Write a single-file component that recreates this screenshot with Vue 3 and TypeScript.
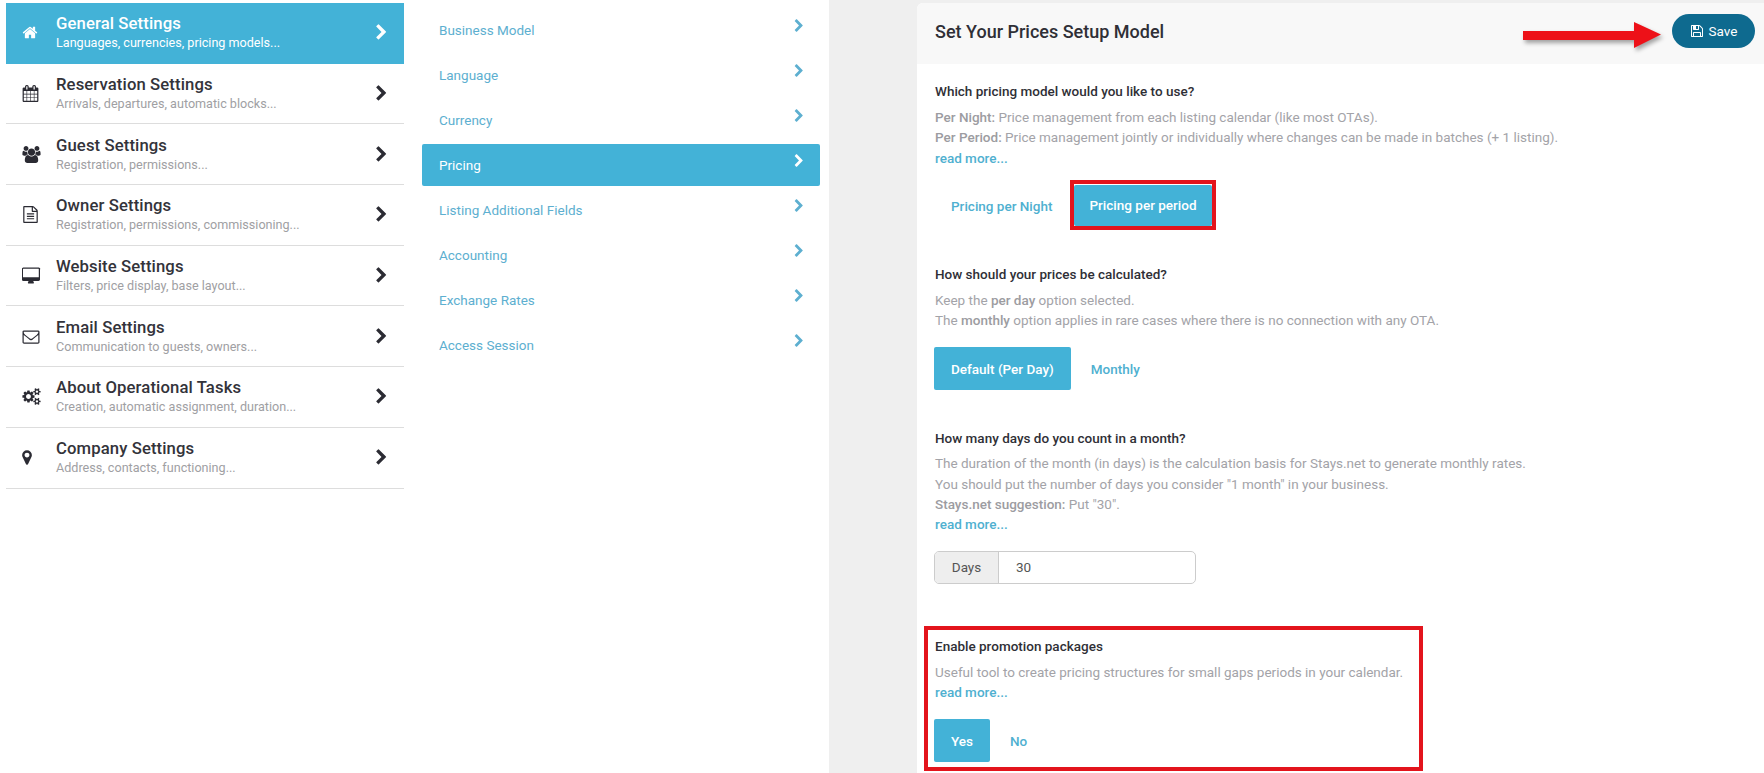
<script setup lang="ts">
interface NavItem {
  title: string
  sub: string
  icon: string
  box: string
  w: number
  active?: boolean
}

const chevron = 'M1363 877l-742 742q-19 19-45 19t-45-19l-166-166q-19-19-19-45t19-45l531-531-531-531q-19-19-19-45t19-45l166-166q19-19 45-19t45 19l742 742q19 19 19 45t-19 45z'
const floppy = 'M512 1536h768v-384h-768v384zm896 0h128v-896q0-14-10-38.500t-20-34.500l-281-281q-10-10-34-20t-39-10v416q0 40-28 68t-68 28h-576q-40 0-68-28t-28-68v-416h-128v1280h128v-416q0-40 28-68t68-28h832q40 0 68 28t28 68v416zm-384-928v-320q0-13-9.500-22.500t-22.500-9.500h-192q-13 0-22.500 9.500t-9.500 22.500v320q0 13 9.500 22.500t22.500 9.500h192q13 0 22.500-9.500t9.500-22.500zm640 32v928q0 40-28 68t-68 28h-1344q-40 0-68-28t-28-68v-1344q0-40 28-68t68-28h928q40 0 88 20t76 48l280 280q28 28 48 76t20 88z'

const mainNav: NavItem[] = [
  { title: 'General Settings', sub: 'Languages, currencies, pricing models...', active: true, box: '0 0 1792 1792', w: 16,
    icon: 'M1472 992v480q0 26-19 45t-45 19h-384v-384h-256v384h-384q-26 0-45-19t-19-45v-480q0-1 .5-3t.5-3l575-474 575 474q1 2 1 6zm223-69l-62 74q-8 9-21 11h-3q-13 0-21-7l-692-577-692 577q-12 8-24 7-13-2-21-11l-62-74q-8-10-7-23.5t11-21.5l719-599q32-26 76-26t76 26l244 204v-195q0-14 9-23t23-9h192q14 0 23 9t9 23v408l219 182q10 8 11 21.5t-7 23.5z' },
  { title: 'Reservation Settings', sub: 'Arrivals, departures, automatic blocks...', box: '0 0 1792 1792', w: 17,
    icon: 'M192 1664h288v-288h-288v288zm352 0h320v-288h-320v288zm-352-352h288v-320h-288v320zm352 0h320v-320h-320v320zm-352-384h288v-288h-288v288zm736 736h320v-288h-320v288zm-384-736h320v-288h-320v288zm768 736h288v-288h-288v288zm-384-352h320v-320h-320v320zm-352-864v-288q0-13-9.5-22.5t-22.5-9.5h-64q-13 0-22.5 9.5t-9.5 22.5v288q0 13 9.5 22.5t22.5 9.5h64q13 0 22.5-9.5t9.5-22.5zm736 864h288v-320h-288v320zm-384-384h320v-288h-320v288zm384 0h288v-288h-288v288zm32-480v-288q0-13-9.5-22.5t-22.5-9.5h-64q-13 0-22.5 9.5t-9.5 22.5v288q0 13 9.5 22.5t22.5 9.5h64q13 0 22.5-9.5t9.5-22.5zm384-64v1280q0 52-38 90t-90 38h-1408q-52 0-90-38t-38-90v-1280q0-52 38-90t90-38h128v-96q0-66 47-113t113-47h64q66 0 113 47t47 113v96h384v-96q0-66 47-113t113-47h64q66 0 113 47t47 113v96h128q52 0 90 38t38 90z' },
  { title: 'Guest Settings', sub: 'Registration, permissions...', box: '0 0 1920 1792', w: 19,
    icon: 'M593 896q-162 5-265 128h-134q-82 0-138-40.500t-56-118.500q0-353 124-353 6 0 43.500 21t97.500 42.500 119 21.500q67 0 133-23-5 37-5 66 0 139 81 256zm1071 637q0 120-73 189.500t-194 69.500h-874q-121 0-194-69.500t-73-189.500q0-53 3.500-103.500t14-109 26.500-108.500 43-97.500 62-81 85.500-53.500 111.500-20q10 0 43 21.500t73 48 107 48 135 21.500 135-21.500 107-48 73-48 43-21.500q61 0 111.500 20t85.500 53.500 62 81 43 97.500 26.500 108.500 14 109 3.500 103.500zm-1024-1277q0 106-75 181t-181 75-181-75-75-181 75-181 181-75 181 75 75 181zm704 384q0 159-112.500 271.500t-271.500 112.500-271.500-112.500-112.500-271.500 112.500-271.500 271.500-112.500 271.500 112.500 112.500 271.500zm576 225q0 78-56 118.500t-138 40.500h-134q-103-123-265-128 81-117 81-256 0-29-5-66 66 23 133 23 59 0 119-21.500t97.500-42.500 43.500-21q124 0 124 353zm-128-609q0 106-75 181t-181 75-181-75-75-181 75-181 181-75 181 75 75 181z' },
  { title: 'Owner Settings', sub: 'Registration, permissions, commissioning...', box: '0 0 1792 1792', w: 17,
    icon: 'M1596 380q28 28 48 76t20 88v1152q0 40-28 68t-68 28h-1344q-40 0-68-28t-28-68v-1600q0-40 28-68t68-28h896q40 0 88 20t76 48zm-444-244v376h376q-10-29-22-41l-313-313q-12-12-41-22zm384 1528v-1024h-416q-40 0-68-28t-28-68v-416h-768v1536h1280zm-1024-864q0-14 9-23t23-9h704q14 0 23 9t9 23v64q0 14-9 23t-23 9h-704q-14 0-23-9t-9-23v-64zm736 224q14 0 23 9t9 23v64q0 14-9 23t-23 9h-704q-14 0-23-9t-9-23v-64q0-14 9-23t23-9h704zm0 256q14 0 23 9t9 23v64q0 14-9 23t-23 9h-704q-14 0-23-9t-9-23v-64q0-14 9-23t23-9h704z' },
  { title: 'Website Settings', sub: 'Filters, price display, base layout...', box: '0 -64 1920 1792', w: 19,
    icon: 'M1728 992v-832q0-13-9.5-22.5t-22.5-9.5h-1600q-13 0-22.5 9.5t-9.5 22.5v832q0 13 9.5 22.5t22.5 9.5h1600q13 0 22.5-9.5t9.5-22.5zm128-832v1088q0 66-47 113t-113 47h-544q0 37 16 77.5t32 71 16 43.5q0 26-19 45t-45 19h-512q-26 0-45-19t-19-45q0-14 16-44t32-70 16-78h-544q-66 0-113-47t-47-113v-1088q0-66 47-113t113-47h1632q66 0 113 47t47 113z' },
  { title: 'Email Settings', sub: 'Communication to guests, owners...', box: '0 0 1792 1792', w: 18,
    icon: 'M1664 1504v-768q-32 36-69 66-268 206-426 338-51 43-83 67t-86.500 48.500-102.500 24.500h-2q-48 0-102.500-24.500t-86.500-48.500-83-67q-158-132-426-338-37-30-69-66v768q0 13 9.500 22.500t22.500 9.500h1472q13 0 22.500-9.500t9.500-22.500zm0-1051v-24.500l-.5-13-3-12.500-5.500-9-9-7.500-14-2.500h-1472q-13 0-22.500 9.500t-9.500 22.500q0 168 147 284 193 152 401 317 6 5 35 29.500t46 37.500 44.500 31.500 50.500 27.500 43 9h2q20 0 43-9t50.500-27.500 44.500-31.500 46-37.500 35-29.500q208-165 401-317 54-43 100.500-115.500t46.500-131.500zm128-37v1088q0 66-47 113t-113 47h-1472q-66 0-113-47t-47-113v-1088q0-66 47-113t113-47h1472q66 0 113 47t47 113z' },
  { title: 'About Operational Tasks', sub: 'Creation, automatic assignment, duration...', box: '0 0 1920 1792', w: 19,
    icon: 'M896 896q0-106-75-181t-181-75-181 75-75 181 75 181 181 75 181-75 75-181zm768 512q0-52-38-90t-90-38-90 38-38 90q0 53 37.5 90.500t90.500 37.500 90.500-37.500 37.500-90.500zm0-1024q0-52-38-90t-90-38-90 38-38 90q0 53 37.5 90.500t90.500 37.500 90.500-37.500 37.500-90.500zm-384 421v185q0 10-7 19.500t-16 10.500l-155 24q-11 35-32 76 34 48 90 115 7 11 7 20 0 12-7 19-23 30-82.500 89.500t-78.500 59.500q-11 0-21-7l-115-90q-37 19-77 31-11 108-23 155-7 24-30 24h-186q-11 0-20-7.500t-10-17.500l-23-153q-34-10-75-31l-118 89q-7 7-20 7-11 0-21-8-144-133-144-160 0-9 7-19 10-14 41-53t47-61q-23-44-35-82l-152-24q-10-1-17-9.500t-7-19.500v-185q0-10 7-19.500t16-10.500l155-24q11-35 32-76-34-48-90-115-7-11-7-20 0-12 7-20 22-30 82-89t79-59q11 0 21 7l115 90q34-18 77-32 11-108 23-154 7-24 30-24h186q11 0 20 7.500t10 17.500l23 153q34 10 75 31l118-89q8-7 20-7 11 0 21 8 144 133 144 160 0 8-7 19-12 16-42 54t-45 60q23 48 34 82l152 23q10 2 17 10.500t7 19.500zm640 533v140q0 16-149 31-12 27-30 52 51 113 51 138 0 4-4 7-122 71-124 71-8 0-46-47t-52-68q-20 2-30 2t-30-2q-14 21-52 68t-46 47q-2 0-124-71-4-3-4-7 0-25 51-138-18-25-30-52-149-15-149-31v-140q0-16 149-31 13-29 30-52-51-113-51-138 0-4 4-7 4-2 35-20t59-34 30-16q8 0 46 46.500t52 67.500q20-2 30-2t30 2q51-71 92-112l6-2q4 0 124 70 4 3 4 7 0 25-51 138 17 23 30 52 149 15 149 31zm0-1024v140q0 16-149 31-12 27-30 52 51 113 51 138 0 4-4 7-122 71-124 71-8 0-46-47t-52-68q-20 2-30 2t-30-2q-14 21-52 68t-46 47q-2 0-124-71-4-3-4-7 0-25 51-138-18-25-30-52-149-15-149-31v-140q0-16 149-31 13-29 30-52-51-113-51-138 0-4 4-7 4-2 35-20t59-34 30-16q8 0 46 46.500t52 67.500q20-2 30-2t30 2q51-71 92-112l6-2q4 0 124 70 4 3 4 7 0 25-51 138 17 23 30 52 149 15 149 31z' },
  { title: 'Company Settings', sub: 'Address, contacts, functioning...', box: '384 0 1024 1792', w: 10,
    icon: 'M1152 640q0-106-75-181t-181-75-181 75-75 181 75 181 181 75 181-75 75-181zm256 0q0 109-33 179l-364 774q-16 33-47.500 52t-67.500 19-67.500-19-46.500-52l-365-774q-33-70-33-179 0-212 150-362t362-150 362 150 150 362z' },
]

const subNav = ['Business Model', 'Language', 'Currency', 'Pricing', 'Listing Additional Fields', 'Accounting', 'Exchange Rates', 'Access Session']
</script>

<template>
  <div class="page">
    <div class="menus">
      <nav class="main-nav">
        <a v-for="item in mainNav" :key="item.title" class="main-row" :class="{ active: item.active }">
          <span class="icon-slot">
            <svg :viewBox="item.box" :width="item.w" height="17" fill="currentColor"><path :d="item.icon" /></svg>
          </span>
          <span class="main-text">
            <span class="main-title">{{ item.title }}</span>
            <span class="main-sub">{{ item.sub }}</span>
          </span>
          <svg class="main-chev" viewBox="0 0 1792 1792" width="17" height="17" fill="currentColor"><path :d="chevron" /></svg>
        </a>
      </nav>

      <nav class="sub-nav">
        <a v-for="name in subNav" :key="name" class="sub-row" :class="{ active: name === 'Pricing' }">
          <span>{{ name }}</span>
          <svg class="sub-chev" viewBox="0 0 1792 1792" width="14" height="14" fill="currentColor"><path :d="chevron" /></svg>
        </a>
      </nav>
    </div>

    <main class="content">
      <section class="card">
        <header class="card-head">
          <h1>Set Your Prices Setup Model</h1>
          <button class="save">
            <svg viewBox="0 0 1792 1792" width="14" height="14" fill="currentColor"><path :d="floppy" /></svg>
            Save
          </button>
          <svg class="arrow" viewBox="0 0 138 26" width="138" height="26">
            <path d="M0 9h111V0l27 12.500L111 26V18H0z" fill="#ed1118" />
          </svg>
        </header>

        <div class="card-body">
          <div class="block first">
            <h2>Which pricing model would you like to use?</h2>
            <p><b>Per Night:</b> Price management from each listing calendar (like most OTAs).</p>
            <p><b>Per Period:</b> Price management jointly or individually where changes can be made in batches (+ 1 listing).</p>
            <a class="more">read more...</a>
            <div class="toggle">
              <button class="opt">Pricing per Night</button>
              <button class="opt on marked">Pricing per period</button>
            </div>
          </div>

          <div class="block second">
            <h2>How should your prices be calculated?</h2>
            <p>Keep the <b>per day</b> option selected.</p>
            <p>The <b>monthly</b> option applies in rare cases where there is no connection with any OTA.</p>
            <div class="toggle">
              <button class="opt on">Default (Per Day)</button>
              <button class="opt">Monthly</button>
            </div>
          </div>

          <div class="block third">
            <h2>How many days do you count in a month?</h2>
            <p>The duration of the month (in days) is the calculation basis for Stays.net to generate monthly rates.</p>
            <p>You should put the number of days you consider "1 month" in your business.</p>
            <p><b>Stays.net suggestion:</b> Put "30".</p>
            <a class="more">read more...</a>
            <div class="days">
              <span class="days-label">Days</span>
              <span class="days-value">30</span>
            </div>
          </div>

          <div class="block fourth">
            <span class="frame"></span>
            <h2>Enable promotion packages</h2>
            <p>Useful tool to create pricing structures for small gaps periods in your calendar.</p>
            <a class="more">read more...</a>
            <div class="toggle">
              <button class="opt on">Yes</button>
              <button class="opt">No</button>
            </div>
          </div>
        </div>
      </section>
    </main>
  </div>
</template>

<style scoped>
.page {
  display: flex;
  height: 773px;
  overflow: hidden;
  font-family: Roboto, "Liberation Sans", sans-serif;
  background: #fff;
}

.menus {
  width: 829px;
  flex: none;
  display: flex;
  gap: 18px;
  padding-left: 6px;
  box-sizing: border-box;
}

.main-nav {
  width: 398px;
  padding-top: 3px;
}

.main-row {
  display: flex;
  align-items: center;
  height: 60.7px;
  box-sizing: border-box;
  border-bottom: 1px solid #ddd;
  color: #2b2b33;
}

.main-row.active {
  background: #43b2d7;
  color: #fff;
  border-bottom-color: #43b2d7;
}

.icon-slot {
  width: 50px;
  padding-left: 16px;
  box-sizing: border-box;
  display: flex;
  flex: none;
}

.main-text {
  flex: 1;
  display: flex;
  flex-direction: column;
  margin-top: -1px;
}

.main-title {
  font-size: 16.7px;
  font-weight: 500;
  line-height: 21px;
  letter-spacing: 0.1px;
  color: #33333a;
}

.main-row.active .main-title {
  color: #fff;
}

.main-sub {
  font-size: 12.6px;
  line-height: 17px;
  color: #a0a0a3;
}

.main-row.active .main-sub {
  color: #fff;
}

.main-chev {
  margin-right: 14px;
  flex: none;
}

.sub-nav {
  width: 398px;
  padding-top: 9px;
  display: flex;
  flex-direction: column;
  gap: 3px;
}

.sub-row {
  display: flex;
  align-items: center;
  justify-content: space-between;
  height: 42px;
  padding: 0 14px 1px 17px;
  box-sizing: border-box;
  border-radius: 2px;
  font-size: 13.5px;
  color: #5dafd0;
}

.sub-row.active {
  background: #43b2d7;
  color: #fff;
}

.sub-chev {
  margin-top: -8px;
}

.content {
  flex: 1;
  min-width: 0;
  background: #efefef;
  padding: 3px 0 0 88px;
}

.card {
  background: #fff;
  height: 100%;
  border-radius: 6px 0 0 0;
  overflow: hidden;
}

.card-head {
  position: relative;
  height: 61px;
  background: #f8f8f8;
  display: flex;
  align-items: center;
  justify-content: space-between;
  padding: 0 9px 5px 18px;
  box-sizing: border-box;
}

.card-head h1 {
  margin: 0;
  font-size: 18px;
  font-weight: 500;
  color: #2f2f36;
}

.arrow {
  position: absolute;
  left: 606px;
  top: 19px;
  overflow: visible;
  filter: drop-shadow(2px 3px 2px rgba(0, 0, 0, 0.35));
}

.save {
  height: 34px;
  width: 83px;
  border: none;
  border-radius: 17px;
  background: #0e6a8f;
  color: #fff;
  font: 400 13.5px Roboto, sans-serif;
  display: flex;
  align-items: center;
  justify-content: center;
  gap: 5px;
}

.card-body {
  padding: 0 0 0 18px;
}

.block {
  position: relative;
}

.first {
  padding-top: 17px;
}

.second {
  margin-top: 36px;
}

.third {
  margin-top: 38px;
}

.fourth {
  margin-top: 52px;
}

h2 {
  margin: 0 0 6px;
  font-size: 13.5px;
  line-height: 20px;
  font-weight: 500;
  color: #2f2f36;
}

.third h2 {
  margin-bottom: 5px;
}

p {
  margin: 0;
  font-size: 13.5px;
  line-height: 20.3px;
  color: #a3a3a8;
}

p b {
  font-weight: 500;
  color: #9c9ca1;
}

.more {
  display: block;
  font-size: 13.5px;
  font-weight: 500;
  line-height: 20.3px;
  color: #4fb0d0;
}

.toggle {
  display: flex;
  margin-top: 17px;
  margin-left: -1px;
}

.opt {
  height: 43px;
  padding: 0 17px;
  margin-right: 3px;
  border: none;
  border-radius: 2px;
  background: none;
  font: 500 13.5px Roboto, sans-serif;
  color: #4fb0d0;
}

.opt.on {
  background: #43b2d7;
  color: #fff;
}

.opt.marked {
  position: relative;
  height: 41px;
  padding: 0 15px;
  margin-left: 2px;
}

.opt.marked::after {
  content: "";
  position: absolute;
  inset: -5px -4px -4px -4px;
  border: 4px solid #e3141c;
}

.days {
  display: flex;
  width: 262px;
  height: 33px;
  box-sizing: border-box;
  margin: 16px 0 0 -1px;
  border: 1px solid #ccc;
  border-radius: 5px;
  overflow: hidden;
  font-size: 13.5px;
  color: #555;
}

.days-label {
  width: 63px;
  background: #eee;
  border-right: 1px solid #ccc;
  display: flex;
  align-items: center;
  justify-content: center;
}

.days-value {
  padding-left: 17px;
  display: flex;
  align-items: center;
}

.frame {
  position: absolute;
  left: -11px;
  top: -10px;
  width: 499px;
  height: 145px;
  box-sizing: border-box;
  border: 4px solid #e3141c;
}
</style>

<style>
html,
body {
  margin: 0;
  background: #fff;
}
</style>
